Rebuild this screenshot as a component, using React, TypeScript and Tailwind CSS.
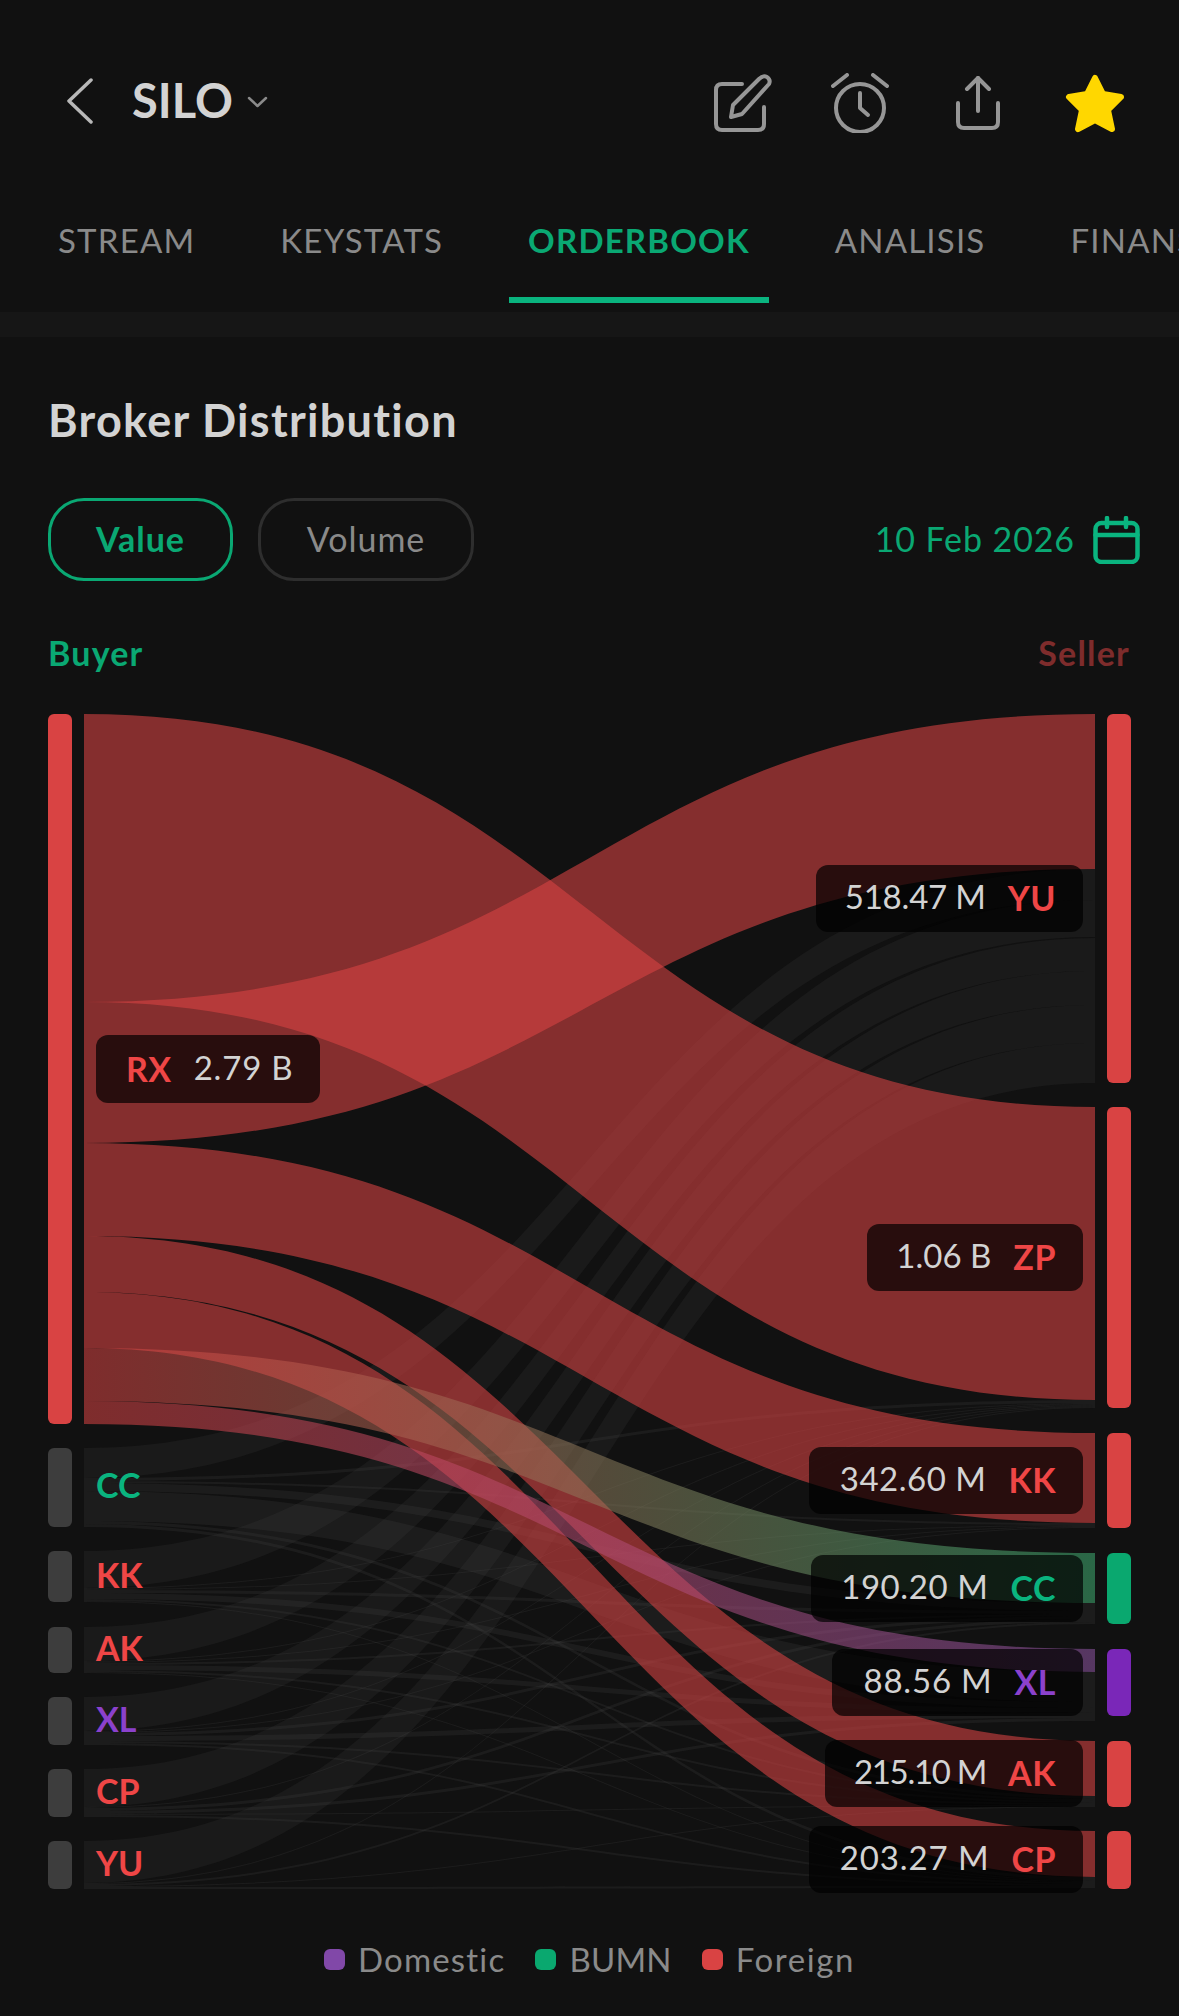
import React from 'react';

const FONT = 'font-["Lato","Noto_Sans",sans-serif]';
const X0 = 84;
const X1 = 1095;
const MID = (X0 + X1) / 2;

const ribbon = (l0: number, l1: number, r0: number, r1: number) =>
  `M${X0},${l0} C${MID},${l0} ${MID},${r0} ${X1},${r0} L${X1},${r1} C${MID},${r1} ${MID},${l1} ${X0},${l1} Z`;

// thick grey flows, all running into the top seller block
const greyBig = [
  [1448, 1478, 869, 900],
  [1551, 1588, 900, 937],
  [1627, 1661, 938, 971],
  [1697, 1731, 971, 1005],
  [1769, 1807, 1005, 1043],
  [1841, 1883, 1043, 1083],
];

// thin grey flows: rows are left nodes, columns are right nodes
const leftStart = [1478, 1588, 1661, 1731, 1807, 1883];
const rightStart = [1400, 1523, 1603, 1672, 1796, 1877];
const matrix = [
  [3, 2, 8, 30, 3, 3],
  [1, 1, 3, 6, 2, 1],
  [1, 1, 2, 5, 2, 1],
  [1, 1, 3, 5, 2, 2],
  [1, 0, 3, 3, 1, 2],
  [1, 0, 2, 0, 1, 2],
];

const greyThin: number[][] = [];
const rightPos = [...rightStart];
matrix.forEach((row, i) => {
  let y = leftStart[i];
  row.forEach((w, j) => {
    if (w > 0) {
      greyThin.push([y, y + w, rightPos[j], rightPos[j] + w]);
      y += w;
      rightPos[j] += w;
    }
  });
});

const leftNodes = [
  { code: 'CC', y: 1448, h: 79, text: 'text-[#0ab47f]', pos: 'top-[765px]' },
  { code: 'KK', y: 1551, h: 51, text: 'text-[#ef4646]', pos: 'top-[855px]' },
  { code: 'AK', y: 1627, h: 46, text: 'text-[#ef4646]', pos: 'top-[928px]' },
  { code: 'XL', y: 1697, h: 48, text: 'text-[#8b41cc]', pos: 'top-[999px]' },
  { code: 'CP', y: 1769, h: 48, text: 'text-[#ef4646]', pos: 'top-[1071px]' },
  { code: 'YU', y: 1841, h: 48, text: 'text-[#ef4646]', pos: 'top-[1143px]' },
];

const rightNodes = [
  { y: 714, h: 369, fill: '#d94343' },
  { y: 1107, h: 301, fill: '#d94343' },
  { y: 1433, h: 95, fill: '#d94343' },
  { y: 1553, h: 71, fill: '#0aa86f' },
  { y: 1649, h: 67, fill: '#7a27b8' },
  { y: 1741, h: 66, fill: '#d94343' },
  { y: 1831, h: 58, fill: '#d94343' },
];

const rightLabels = [
  { value: '518.47 M', code: 'YU', text: 'text-[#ef4646]', box: 'top-[165px] w-[267px]', num: 'tracking-[-0.2px]' },
  { value: '1.06 B', code: 'ZP', text: 'text-[#ef4646]', box: 'top-[524px] w-[216px]', num: 'tracking-[0px]' },
  { value: '342.60 M', code: 'KK', text: 'text-[#ef4646]', box: 'top-[747px] w-[274px]', num: 'tracking-[0.5px]' },
  { value: '190.20 M', code: 'CC', text: 'text-[#0ab47f]', box: 'top-[855px] w-[272px]', num: 'tracking-[0.6px]' },
  { value: '88.56 M', code: 'XL', text: 'text-[#8b41cc]', box: 'top-[949px] w-[251px]', num: 'tracking-[0.8px]' },
  { value: '215.10 M', code: 'AK', text: 'text-[#ef4646]', box: 'top-[1040px] w-[258px]', num: 'tracking-[-1.3px]' },
  { value: '203.27 M', code: 'CP', text: 'text-[#ef4646]', box: 'top-[1126px] w-[274px]', num: 'tracking-[0.9px]' },
];

const tabs = ['STREAM', 'KEYSTATS', 'ORDERBOOK', 'ANALISIS', 'FINANSIAL'];

const Sankey = () => (
  <svg width="1179" height="1200" viewBox="0 700 1179 1200" className="block">
    <defs>
      <linearGradient id="toGreen" gradientUnits="userSpaceOnUse" x1={X0} y1="0" x2={X1} y2="0">
        <stop offset="0" stopColor="#d94343" />
        <stop offset="1" stopColor="#3fae72" />
      </linearGradient>
      <linearGradient id="toPurple" gradientUnits="userSpaceOnUse" x1={X0} y1="0" x2={X1} y2="0">
        <stop offset="0" stopColor="#d94343" />
        <stop offset="1" stopColor="#8f55a5" />
      </linearGradient>
    </defs>
    {greyBig.map((l, i) => (
      <path key={i} d={ribbon(l[0], l[1], l[2], l[3])} fill="#4a4a4a" fillOpacity="0.17" />
    ))}
    {greyThin.map((l, i) => (
      <path key={i} d={ribbon(l[0], l[1], l[2], l[3])} fill="#4a4a4a" fillOpacity="0.2" />
    ))}
    <path d={ribbon(714, 1002, 1107, 1400)} fill="#d94343" fillOpacity="0.58" />
    <path d={ribbon(1002, 1143, 714, 869)} fill="#d94343" fillOpacity="0.58" />
    <path d={ribbon(1143, 1236, 1433, 1523)} fill="#d94343" fillOpacity="0.58" />
    <path d={ribbon(1236, 1292, 1741, 1796)} fill="#d94343" fillOpacity="0.58" />
    <path d={ribbon(1292, 1348, 1831, 1877)} fill="#d94343" fillOpacity="0.58" />
    <path d={ribbon(1348, 1401, 1553, 1603)} fill="url(#toGreen)" fillOpacity="0.55" />
    <path d={ribbon(1401, 1424, 1649, 1672)} fill="url(#toPurple)" fillOpacity="0.55" />
    <rect x="48" y="714" width="24" height="710" rx="6" fill="#d94343" />
    {leftNodes.map(n => (
      <rect key={n.code} x="48" y={n.y} width="24" height={n.h} rx="6" fill="#3d3d3d" />
    ))}
    {rightNodes.map(n => (
      <rect key={n.y} x="1107" y={n.y} width="24" height={n.h} rx="6" fill={n.fill} />
    ))}
  </svg>
);

const App = () => {
  return (
    <div className={`min-h-screen w-[1179px] overflow-hidden bg-[#111111] text-[33px] ${FONT}`}>
      <header className="flex h-[206px] items-center pl-[67px] pr-[53px]">
        <svg className="mb-[4px]" width="26" height="46" viewBox="0 0 26 46" fill="none" stroke="#b8b8b8" strokeWidth="3.5" strokeLinecap="round" strokeLinejoin="round">
          <path d="M24,2 L2,23 L24,44" />
        </svg>
        <span className="mb-[6px] ml-[39px] text-[47px] font-bold leading-none text-[#d3d3d3]">SILO</span>
        <svg className="mb-[2px] ml-[14px]" width="21" height="12" viewBox="0 0 21 12" fill="none" stroke="#8a8a8a" strokeWidth="2.5" strokeLinecap="round" strokeLinejoin="round">
          <path d="M2,2 L10.5,10 L19,2" />
        </svg>
        <svg className="ml-auto" width="60" height="60" viewBox="0 0 60 60" fill="none" stroke="#969696" strokeWidth="4" strokeLinecap="round" strokeLinejoin="round">
          <path d="M30,11 H10 Q4,11 4,17 V51 Q4,57 10,57 H46 Q52,57 52,51 V34" />
          <path d="M19,44 L21,32 L47,6 Q51,2 55,4 Q59,7 57,11 L30,41 Z" />
        </svg>
        <svg className="ml-[59px]" width="58" height="60" viewBox="0 0 58 60" fill="none" stroke="#969696" strokeWidth="4" strokeLinecap="round" strokeLinejoin="round">
          <circle cx="29" cy="35" r="24" />
          <path d="M29,20 V35 L37,42" />
          <path d="M2,13 L16,2" />
          <path d="M56,13 L42,2" />
        </svg>
        <svg className="ml-[67px]" width="44" height="54" viewBox="0 0 44 54" fill="none" stroke="#969696" strokeWidth="4" strokeLinecap="round" strokeLinejoin="round">
          <path d="M22,35 V2" />
          <path d="M11,13 L22,2 L33,13" />
          <path d="M2,27 V46 Q2,52 8,52 H36 Q42,52 42,46 V27" />
        </svg>
        <svg className="ml-[64px]" width="62" height="60" viewBox="0 0 62 60">
          <path d="M31,5 L39,21 L57,24 L44,37 L48,56 L31,47 L14,56 L18,37 L5,24 L23,21 Z" fill="#ffd700" stroke="#ffd700" strokeWidth="6" strokeLinejoin="round" />
        </svg>
      </header>

      <nav className="flex h-[106px] gap-[47px] overflow-hidden pl-[39px]">
        {tabs.map(t => (
          <div
            key={t}
            className={
              t === 'ORDERBOOK'
                ? 'flex h-[97px] shrink-0 items-start border-b-[6px] border-[#0ab47f] px-[19px] pt-[12px] text-[33px] font-bold leading-[44px] tracking-[1.2px] text-[#0aa873]'
                : 'flex h-[97px] shrink-0 items-start px-[19px] pt-[12px] text-[33px] leading-[44px] tracking-[1.2px] text-[#8a8a8a]'
            }
          >
            {t}
          </div>
        ))}
      </nav>

      <div className="h-[25px] bg-[#161616]" />

      <h1 className="mt-[55px] pl-[48px] text-[45px] font-bold leading-[56px] tracking-[1.3px] text-[#d3d3d3]">Broker Distribution</h1>

      <div className="mt-[50px] flex items-center pl-[48px] pr-[39px] text-[34px] tracking-[1px]">
        <button className="flex h-[83px] w-[185px] items-center justify-center rounded-[36px] border-[3px] border-[#0aa873] pb-[2px] font-bold text-[#0aa873]">
          Value
        </button>
        <button className="ml-[25px] flex h-[83px] w-[216px] items-center justify-center rounded-[36px] border-[3px] border-[#2e2e2e] pb-[2px] text-[#8a8a8a]">
          Volume
        </button>
        <span className="ml-auto pb-[2px] tracking-[0.9px] text-[#0aa873]">10 Feb 2026</span>
        <svg className="ml-[18px]" width="47" height="48" viewBox="0 0 47 48" fill="none" stroke="#0ab47f" strokeWidth="4.5" strokeLinecap="round" strokeLinejoin="round">
          <rect x="2.5" y="7" width="42" height="39" rx="6" />
          <path d="M2.5,19 H44.5" />
          <path d="M14,2 V11" />
          <path d="M33,2 V11" />
        </svg>
      </div>

      <div className="mt-[52px] flex justify-between pl-[48px] pr-[49px] text-[34px] font-bold leading-[40px] tracking-[1.2px]">
        <span className="text-[#0aa873]">Buyer</span>
        <span className="text-[#7e2c2c]">Seller</span>
      </div>

      <div className="relative mt-[27px] h-[1200px]">
        <Sankey />
        <div className="absolute left-[96px] top-[335px] flex h-[68px] w-[224px] items-center gap-[22px] rounded-[12px] bg-black/70 pb-[2px] pl-[30px]">
          <span className="text-[34px] font-bold tracking-[0.5px] text-[#ef4646]">RX</span>
          <span className="tracking-[0.8px] text-[#d3d3d3]">2.79 B</span>
        </div>
        {leftNodes.map(n => (
          <span key={n.code} className={`absolute left-[96px] text-[34px] font-bold leading-[40px] ${n.pos} ${n.text}`}>
            {n.code}
          </span>
        ))}
        {rightLabels.map(l => (
          <div key={l.code} className={`absolute right-[96px] flex h-[67px] items-center justify-end gap-[22px] rounded-[12px] bg-black/70 pb-[3px] pr-[27px] ${l.box}`}>
            <span className={`text-[#d3d3d3] ${l.num}`}>{l.value}</span>
            <span className={`text-[34px] font-bold tracking-[0.5px] ${l.text}`}>{l.code}</span>
          </div>
        ))}
      </div>

      <div className="mt-[39px] flex items-center justify-center gap-[30px] leading-[40px] text-[#8a8a8a]">
        <div className="flex items-center gap-[13px] tracking-[1.2px]">
          <span className="h-[21px] w-[21px] rounded-[6px] bg-[#8148a8]" />
          Domestic
        </div>
        <div className="flex items-center gap-[13px] tracking-[0.2px]">
          <span className="h-[21px] w-[21px] rounded-[6px] bg-[#0aa86f]" />
          BUMN
        </div>
        <div className="flex items-center gap-[13px] tracking-[1.6px]">
          <span className="h-[21px] w-[21px] rounded-[6px] bg-[#d94343]" />
          Foreign
        </div>
      </div>
    </div>
  );
};

export default App;
